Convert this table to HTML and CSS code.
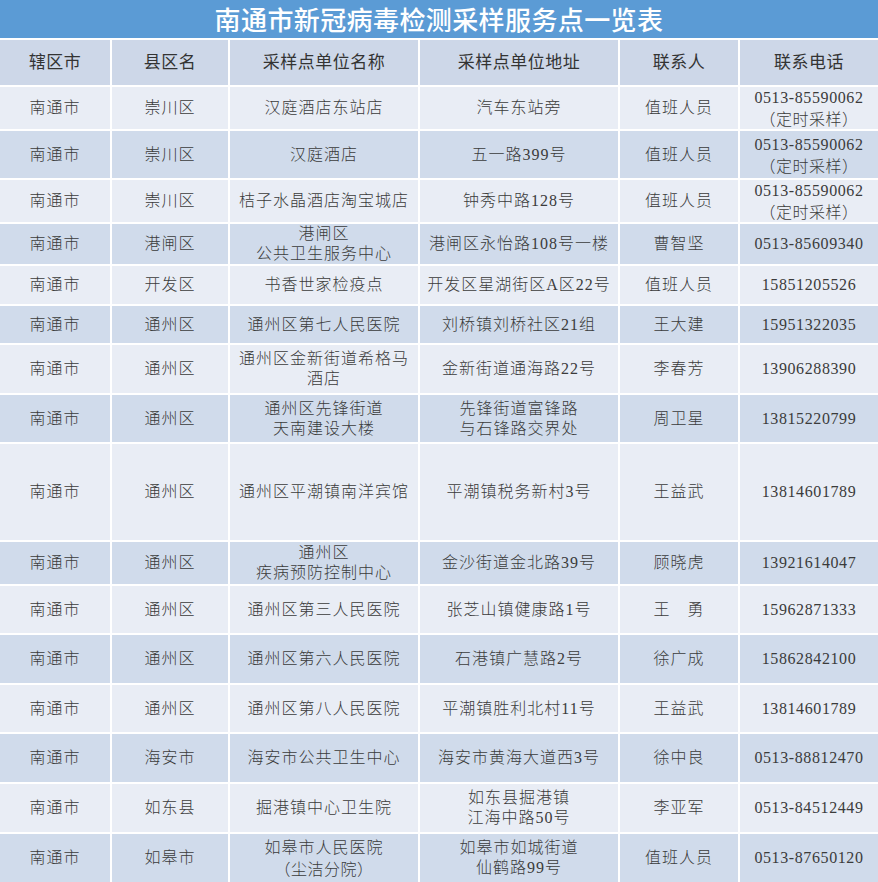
FILE: index.html
```html
<!DOCTYPE html>
<html lang="zh-CN">
<head>
<meta charset="utf-8">
<title>南通市新冠病毒检测采样服务点一览表</title>
<link rel="stylesheet" href="styles.css">
</head>
<body>
<div class="page">
  <div class="title">南通市新冠病毒检测采样服务点一览表</div>
  <div class="grid">
    <div class="row head">
      <div>辖区市</div><div>县区名</div><div>采样点单位名称</div><div>采样点单位地址</div><div>联系人</div><div>联系电话</div>
    </div>
    <div class="row light">
      <div>南通市</div><div>崇川区</div><div>汉庭酒店东站店</div><div>汽车东站旁</div><div>值班人员</div><div class="tel">0513-85590062<br><span class="cjk">（定时采样）</span></div>
    </div>
    <div class="row dark">
      <div>南通市</div><div>崇川区</div><div>汉庭酒店</div><div>五一路399号</div><div>值班人员</div><div class="tel">0513-85590062<br><span class="cjk">（定时采样）</span></div>
    </div>
    <div class="row light">
      <div>南通市</div><div>崇川区</div><div>桔子水晶酒店淘宝城店</div><div>钟秀中路128号</div><div>值班人员</div><div class="tel">0513-85590062<br><span class="cjk">（定时采样）</span></div>
    </div>
    <div class="row dark">
      <div>南通市</div><div>港闸区</div><div>港闸区<br>公共卫生服务中心</div><div>港闸区永怡路108号一楼</div><div>曹智坚</div><div class="tel">0513-85609340</div>
    </div>
    <div class="row light">
      <div>南通市</div><div>开发区</div><div>书香世家检疫点</div><div>开发区星湖街区A区22号</div><div>值班人员</div><div class="tel">15851205526</div>
    </div>
    <div class="row dark">
      <div>南通市</div><div>通州区</div><div>通州区第七人民医院</div><div>刘桥镇刘桥社区21组</div><div>王大建</div><div class="tel">15951322035</div>
    </div>
    <div class="row light">
      <div>南通市</div><div>通州区</div><div>通州区金新街道希格马<br>酒店</div><div>金新街道通海路22号</div><div>李春芳</div><div class="tel">13906288390</div>
    </div>
    <div class="row dark">
      <div>南通市</div><div>通州区</div><div>通州区先锋街道<br>天南建设大楼</div><div>先锋街道富锋路<br>与石锋路交界处</div><div>周卫星</div><div class="tel">13815220799</div>
    </div>
    <div class="row light">
      <div>南通市</div><div>通州区</div><div>通州区平潮镇南洋宾馆</div><div>平潮镇税务新村3号</div><div>王益武</div><div class="tel">13814601789</div>
    </div>
    <div class="row dark">
      <div>南通市</div><div>通州区</div><div>通州区<br>疾病预防控制中心</div><div>金沙街道金北路39号</div><div>顾晓虎</div><div class="tel">13921614047</div>
    </div>
    <div class="row light">
      <div>南通市</div><div>通州区</div><div>通州区第三人民医院</div><div>张芝山镇健康路1号</div><div>王　勇</div><div class="tel">15962871333</div>
    </div>
    <div class="row dark">
      <div>南通市</div><div>通州区</div><div>通州区第六人民医院</div><div>石港镇广慧路2号</div><div>徐广成</div><div class="tel">15862842100</div>
    </div>
    <div class="row light">
      <div>南通市</div><div>通州区</div><div>通州区第八人民医院</div><div>平潮镇胜利北村11号</div><div>王益武</div><div class="tel">13814601789</div>
    </div>
    <div class="row dark">
      <div>南通市</div><div>海安市</div><div>海安市公共卫生中心</div><div>海安市黄海大道西3号</div><div>徐中良</div><div class="tel">0513-88812470</div>
    </div>
    <div class="row light">
      <div>南通市</div><div>如东县</div><div>掘港镇中心卫生院</div><div>如东县掘港镇<br>江海中路50号</div><div>李亚军</div><div class="tel">0513-84512449</div>
    </div>
    <div class="row dark">
      <div>南通市</div><div>如皋市</div><div>如皋市人民医院<br><span class="cjk">（尘洁分院）</span></div><div>如皋市如城街道<br>仙鹤路99号</div><div>值班人员</div><div class="tel">0513-87650120</div>
    </div>
  </div>
</div>
</body>
</html>
```

FILE: styles.css
```css
html, body {
  margin: 0;
  padding: 0;
  background: #ffffff;
}

.page {
  width: 878px;
  height: 882px;
  overflow: hidden;
  background: #ffffff;
}

.title {
  height: 38px;
  margin-bottom: 2px;
  background: #5b9bd5;
  color: #ffffff;
  font-family: "Noto Sans CJK SC", "Noto Sans", sans-serif;
  font-weight: 500;
  font-size: 26px;
  letter-spacing: 0.4px;
  line-height: 38px;
  text-align: center;
}

.grid {
  display: grid;
  grid-template-columns: 110px 116px 188px 198px 118px 138px;
  grid-template-rows: 45px 42px 47px 42px 40px 38px 37px 48px 47px 96px 42px 47px 48px 47px 48px 48px 48px;
  column-gap: 2px;
  row-gap: 2px;
  background: #ffffff;
  font-family: "Liberation Serif", "Noto Sans CJK SC", serif;
  font-size: 16px;
  font-weight: 300;
  letter-spacing: 1px;
  color: #3b3b3b;
}

.row {
  display: contents;
}

.row > div {
  display: flex;
  flex-direction: column;
  align-items: center;
  justify-content: center;
  text-align: center;
  line-height: 20px;
}

.head > div {
  background: #cdd7e8;
  font-size: 17px;
  font-weight: 400;
  letter-spacing: 0.5px;
  color: #333333;
}

.light > div {
  background: #e9edf5;
}

.dark > div {
  background: #d0dbeb;
}

.tel {
  letter-spacing: 0.6px;
}

.cjk {
  font-family: "Noto Sans CJK SC", sans-serif;
  letter-spacing: 0.5px;
}
```
